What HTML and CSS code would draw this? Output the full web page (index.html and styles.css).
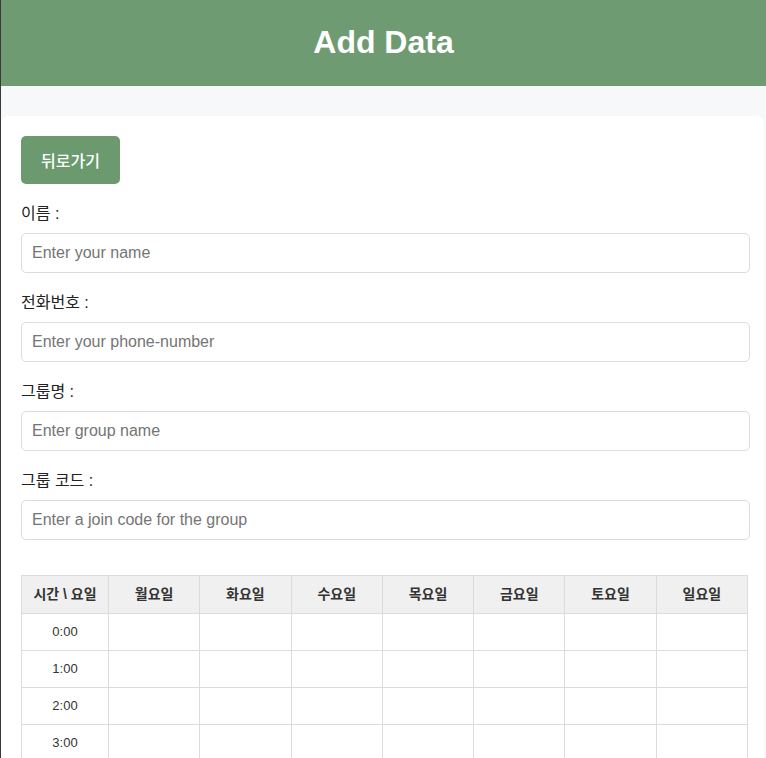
FILE: index.html
```
<!DOCTYPE html>
<html lang="ko">
<head>
<meta charset="utf-8">
<title>Add Data</title>
<link rel="stylesheet" href="styles.css">
</head>
<body>
<header class="topbar"><h1 class="title">Add Data</h1></header>
<main class="card">
  <button class="back-btn" type="button">뒤로가기</button>
  <div class="field">
    <label class="label">이름 :</label>
    <input class="input" type="text" placeholder="Enter your name">
  </div>
  <div class="field">
    <label class="label">전화번호 :</label>
    <input class="input" type="text" placeholder="Enter your phone-number">
  </div>
  <div class="field">
    <label class="label">그룹명 :</label>
    <input class="input" type="text" placeholder="Enter group name">
  </div>
  <div class="field">
    <label class="label">그룹 코드 :</label>
    <input class="input" type="text" placeholder="Enter a join code for the group">
  </div>
  <table class="schedule">
    <thead>
      <tr>
        <th class="col-time">시간 \ 요일</th>
        <th>월요일</th><th>화요일</th><th>수요일</th><th>목요일</th><th>금요일</th><th>토요일</th><th>일요일</th>
      </tr>
    </thead>
    <tbody>
      <tr><td>0:00</td><td></td><td></td><td></td><td></td><td></td><td></td><td></td></tr>
      <tr><td>1:00</td><td></td><td></td><td></td><td></td><td></td><td></td><td></td></tr>
      <tr><td>2:00</td><td></td><td></td><td></td><td></td><td></td><td></td><td></td></tr>
      <tr><td>3:00</td><td></td><td></td><td></td><td></td><td></td><td></td><td></td></tr>
    </tbody>
  </table>
</main>
</body>
</html>
```
FILE: styles.css
```
* { box-sizing: border-box; }
html, body { margin: 0; padding: 0; }
body {
  background: #f7f8fa;
  border-left: 1px solid #3a3a3a;
  min-height: 758px;
  font-family: "Liberation Sans", "Noto Sans CJK KR", sans-serif;
  color: #333;
  overflow: hidden;
}
.topbar {
  height: 86px;
  background: #6f9b72;
  display: flex;
  align-items: center;
  justify-content: center;
}
.title {
  margin: 0 0 2px;
  color: #fff;
  font-size: 32px;
  font-weight: bold;
  line-height: 37px;
}
.card {
  margin: 30px 2px 0 0;
  background: #fff;
  border-radius: 8px;
  padding: 20px 14px 20px 20px;
}
.back-btn {
  display: block;
  width: 99px;
  height: 48px;
  border: none;
  border-radius: 5px;
  background: #6a9a6e;
  color: #fff;
  font-family: "Liberation Sans", "Noto Sans CJK KR", sans-serif;
  font-size: 16px;
  font-weight: 500;
  margin-bottom: 20px;
  padding: 0;
}
.field { margin-bottom: 20px; }
.label {
  display: block;
  font-size: 16px;
  line-height: 19px;
  margin-bottom: 10px;
  color: #222;
}
.input {
  display: block;
  width: 100%;
  height: 40px;
  border: 1px solid #dcdcdf;
  border-radius: 5px;
  padding: 0 10px;
  font-family: "Liberation Sans", sans-serif;
  font-size: 16px;
  color: #333;
  outline: none;
}
.input::placeholder { color: #757575; }
.schedule {
  margin-top: 35px;
  width: 727px;
  border-collapse: collapse;
  table-layout: fixed;
}
.schedule th, .schedule td {
  border: 1px solid #dcdce0;
  text-align: center;
}
.schedule th {
  background: #f0f0f0;
  font-size: 14px;
  font-weight: bold;
  line-height: 17px;
  padding: 10px 4px;
  color: #333;
}
.schedule .col-time { width: 87px; }
.schedule td {
  font-size: 13px;
  line-height: 16px;
  padding: 10px 4px;
  height: 37px;
  color: #333;
}
```
